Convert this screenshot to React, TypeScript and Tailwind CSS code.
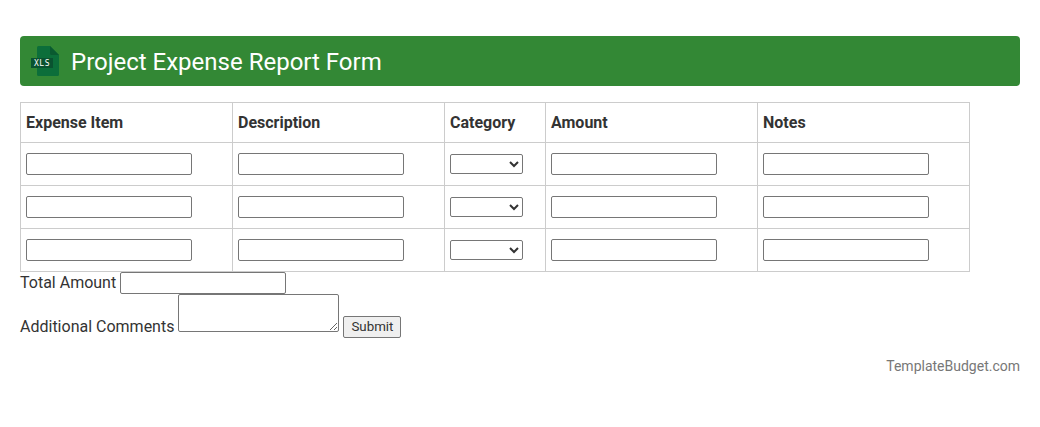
import * as React from 'react';

const columns = ['Expense Item', 'Description', 'Category', 'Amount', 'Notes'];
const columnWidths = ['w-[212px]', 'w-[212px]', 'w-[101px]', 'w-[212px]', 'w-[212px]'];

function TextBox() {
  return <input type="text" className="block w-[166px] h-[22px] border border-[#767676] rounded-[2px] bg-white" />;
}

function XlsIcon() {
  return (
    <svg width="30" height="30" viewBox="0 0 30 30" className="shrink-0">
      <path d="M7 1.500A1.500 1.500 0 0 1 8.500 0H20l9 9v19.500a1.500 1.500 0 0 1-1.500 1.500h-19A1.500 1.500 0 0 1 7 28.500z" fill="#0c6e3a" />
      <path d="M20 0l9 9h-7.500a1.500 1.500 0 0 1-1.500-1.500z" fill="#0a5a30" />
      <rect x="1" y="12" width="22" height="10" fill="#0a5230" />
      <text x="12" y="20" textAnchor="middle" fontSize="8" letterSpacing="0.5" fill="#ffffff" fontFamily="'DejaVu Sans Mono', monospace">XLS</text>
    </svg>
  );
}

export default function App() {
  const rows = [0, 1, 2];
  return (
    <div className="bg-white h-[427px] px-5 pt-9 font-['Roboto',sans-serif] text-base text-[#333333]">
      <div className="flex items-center gap-[11px] h-[50px] pl-[10px] bg-[#338835] rounded-[4px]">
        <XlsIcon />
        <h1 className="text-2xl text-white font-normal pt-[2px]">Project Expense Report Form</h1>
      </div>
      <table className="mt-4 w-[950px] border-collapse table-fixed">
        <thead>
          <tr className="h-[40px]">
            {columns.map((c, i) => (
              <th key={c} className={`${columnWidths[i]} border border-[#cccccc] px-[5px] text-left font-bold`}>{c}</th>
            ))}
          </tr>
        </thead>
        <tbody>
          {rows.map(r => (
            <tr key={r} className="h-[43px]">
              {columns.map(c => (
                <td key={c} className="border border-[#cccccc] px-[5px]">
                  {c === 'Category' ? (
                    <select className="block w-[73px] h-[20px] border border-[#767676] rounded-[2px] bg-white" />
                  ) : (
                    <TextBox />
                  )}
                </td>
              ))}
            </tr>
          ))}
        </tbody>
      </table>
      <div className="flex items-center h-[22px] gap-1">
        <span>Total Amount</span>
        <TextBox />
      </div>
      <div className="flex items-end gap-1 h-[44px]">
        <span className="leading-[22px]">Additional Comments</span>
        <div className="self-start">
          <textarea className="block w-[161px] h-[38px] border border-[#767676] rounded-[2px] bg-white" />
        </div>
        <button className="w-[58px] h-[22px] border border-[#767676] rounded-[2px] bg-[#efefef] text-[13.33px] text-[#333333]">Submit</button>
      </div>
      <div className="flex justify-end mt-[18px] text-[14px] text-[#777777]">TemplateBudget.com</div>
    </div>
  );
}
